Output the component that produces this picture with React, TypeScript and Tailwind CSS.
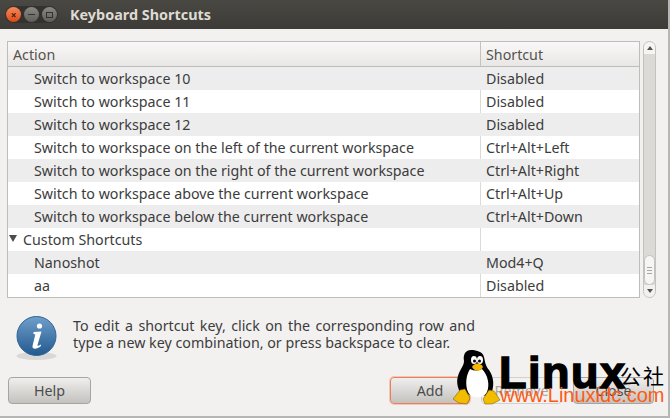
const rows: [string, string, boolean][] = [
  ["Switch to workspace 10", "Disabled", true],
  ["Switch to workspace 11", "Disabled", false],
  ["Switch to workspace 12", "Disabled", true],
  ["Switch to workspace on the left of the current workspace", "Ctrl+Alt+Left", false],
  ["Switch to workspace on the right of the current workspace", "Ctrl+Alt+Right", true],
  ["Switch to workspace above the current workspace", "Ctrl+Alt+Up", false],
  ["Switch to workspace below the current workspace", "Ctrl+Alt+Down", true],
];

function Row({ name, keys, odd, group }: { name: string; keys: string; odd: boolean; group?: boolean }) {
  return (
    <div className={`flex h-[23px] items-center ${odd ? "bg-[#eeeded]" : "bg-white"}`}>
      <div className={`flex w-[472px] items-center ${group ? "pl-[1px]" : "pl-[26px]"}`}>
        {group && <span className="mr-[6px] mb-[3px] h-0 w-0 border-x-[4px] border-t-[7px] border-x-transparent border-t-[#4c4c4c]" />}
        {name}
      </div>
      <div className={`h-full w-px ${odd ? "bg-[#eeeded]" : "bg-[#dcdad5]"}`} />
      <div className="pl-[5px]">{keys}</div>
    </div>
  );
}

function Button({ label, focus, disabled, w }: { label: string; focus?: boolean; disabled?: boolean; w: string }) {
  const look = disabled
    ? "border-[#d3d1cd] bg-[#f2f1f0] text-[#a9a7a3]"
    : focus
      ? "border-[#e9805d] bg-gradient-to-b from-[#f0efed] to-[#c4c2bf] text-[#4c4c4c] shadow-[0_0_0_1px_#f5c6b3]"
      : "border-[#a7a5a1] bg-gradient-to-b from-[#f0efed] to-[#c4c2bf] text-[#4c4c4c]";
  return <button className={`flex h-[27px] items-center justify-center rounded-[4px] border ${look} ${w}`}>{label}</button>;
}

function Tux() {
  return (
    <svg width="50" height="57" viewBox="0 0 50 57" className="absolute left-[452px] top-[349px]">
      <path d="M19 1C13 1 11 6 12 12C12 17 8 20 6 27C4 33 6 40 9 45L38 47C43 38 42 28 37 21C33 16 33 12 32 8C31 3 25 1 19 1Z" fill="#000" />
      <path d="M18 20C14 26 13 36 16 43C19 50 32 50 35 43C38 36 36 26 30 20C26 22 22 22 18 20Z" fill="#fff" />
      <ellipse cx="22" cy="11" rx="3" ry="4" fill="#fff" />
      <ellipse cx="28" cy="11" rx="3" ry="4" fill="#fff" />
      <circle cx="22.5" cy="12" r="1.5" fill="#000" />
      <circle cx="27.5" cy="12" r="1.5" fill="#000" />
      <path d="M20 18C22 14 28 13 31 18C28 23 23 23 20 18Z" fill="#f5b400" />
      <path d="M1 50L8 41L13 40L18 49L15 55L7 54Z" fill="#f2bd00" stroke="#6b5200" strokeWidth="0.5" />
      <path d="M31 50L37 41L42 42L48 51L40 55L33 55Z" fill="#f2bd00" stroke="#6b5200" strokeWidth="0.5" />
    </svg>
  );
}

export default function App() {
  return (
    <div className="relative flex h-[418px] w-[670px] flex-col overflow-hidden bg-[#f2f1f0] font-['Noto_Sans',sans-serif] text-[14.25px] text-[#3c3c3c]">
      <div className="flex h-[29px] items-center bg-gradient-to-b from-[#4a4843] to-[#3c3b37] pl-[5px]">
        <div className="flex items-center gap-[3px] rounded-full bg-[#33322e] p-[1px]">
          <span className="flex h-[15px] w-[15px] items-center justify-center rounded-full bg-gradient-to-b from-[#f58a5a] to-[#dd4814] text-[10px] leading-none font-bold text-[#4a1c08]">×</span>
          <span className="flex h-[15px] w-[15px] items-center justify-center rounded-full bg-gradient-to-b from-[#8a8984] to-[#5f5e5a]">
            <span className="h-[1px] w-[7px] bg-[#33322e]" />
          </span>
          <span className="flex h-[15px] w-[15px] items-center justify-center rounded-full bg-gradient-to-b from-[#8a8984] to-[#5f5e5a]">
            <span className="h-[6px] w-[7px] border border-[#33322e]" />
          </span>
        </div>
        <span className="ml-[12px] text-[14.4px] font-bold text-[#dfdbd2]">Keyboard Shortcuts</span>
      </div>

      <div className="flex pt-[12px] pl-[7px]">
        <div className="h-[257px] w-[633px] border border-[#bfbdb9] bg-white">
          <div className="flex h-[25px] items-center border-b border-[#bfbdb9] bg-gradient-to-b from-[#f9f8f8] to-[#e9e7e5] text-[#55524e]">
            <div className="w-[472px] pt-[1px] pl-[5px]">Action</div>
            <div className="h-full w-px bg-[#c4c2bd]" />
            <div className="pt-[1px] pl-[5px]">Shortcut</div>
          </div>
          {rows.map(([name, keys, odd]) => (
            <Row key={name} name={name} keys={keys} odd={odd} />
          ))}
          <Row name="Custom Shortcuts" keys="" odd={false} group />
          <Row name="Nanoshot" keys="Mod4+Q" odd />
          <Row name="aa" keys="Disabled" odd={false} />
        </div>
        <div className="ml-[3px] flex h-[257px] w-[13px] flex-col rounded-full border border-[#c4c2bd] bg-[#dcdad6]">
          <div className="flex h-[12px] items-center justify-center rounded-t-full bg-[#f6f5f4]">
            <span className="h-0 w-0 border-x-[3px] border-b-[4px] border-x-transparent border-b-[#55524e]" />
          </div>
          <div className="flex-1" />
          <div className="flex h-[30px] flex-col items-center justify-center gap-[2px] rounded-full border border-[#c4c2bd] bg-[#f6f5f4]">
            <span className="h-px w-[5px] bg-[#a8a6a2]" />
            <span className="h-px w-[5px] bg-[#a8a6a2]" />
            <span className="h-px w-[5px] bg-[#a8a6a2]" />
          </div>
          <div className="flex h-[12px] items-center justify-center rounded-b-full bg-[#f2f1f0]">
            <span className="h-0 w-0 border-x-[3px] border-t-[4px] border-x-transparent border-t-[#55524e]" />
          </div>
        </div>
      </div>

      <div className="flex items-start pt-[18px] pl-[16px]">
        <svg width="42" height="46" viewBox="0 0 42 46">
          <defs>
            <linearGradient id="info" x1="0" y1="0" x2="0" y2="1">
              <stop offset="0" stopColor="#6f9fcb" />
              <stop offset="1" stopColor="#23598f" />
            </linearGradient>
          </defs>
          <ellipse cx="20.500" cy="40" rx="20" ry="4" fill="#0000001a" />
          <circle cx="20.500" cy="20" r="19.500" fill="url(#info)" stroke="#2f6394" />
          <circle cx="23.500" cy="10" r="2.600" fill="#fff" />
          <path d="M17.500 16L25.500 15.500L21.500 29C21.300 30 22 30.300 25 28.500L25 30C20.500 33.500 16 33.500 16.500 30L19.300 18.500L17.500 18Z" fill="#fff" />
        </svg>
        <p className="mt-[1px] ml-[15px] leading-[17px]">
          <span className="[word-spacing:1.7px]">To edit a shortcut key, click on the corresponding row and</span>
          <br />
          type a new key combination, or press backspace to clear.
        </p>
      </div>

      <div className="mt-auto mb-[14px] flex px-[8px]">
        <Button label="Help" w="w-[83px]" />
        <Button label="Add" focus w="ml-[299px] w-[80px]" />
        <Button label="Remove" disabled w="ml-[11px] w-[81px]" />
        <Button label="Close" w="ml-[11px] w-[81px]" />
      </div>

      <div className="absolute top-[350px] left-[499px] font-['Liberation_Sans',sans-serif] text-[45px] leading-[46px] font-bold tracking-[1.5px] text-black [-webkit-text-stroke:1.5px_#000]">
        Linux
      </div>
      <div className="absolute top-[361px] left-[620px] font-['Noto_Sans_CJK_SC',sans-serif] text-[21px] leading-[28px] tracking-[2px] text-black">
        公社
      </div>
      <div className="absolute top-[385px] left-[500px] font-['Liberation_Sans',sans-serif] text-[20px] leading-[20px] text-[#ff5a14]">
        www.Linuxidc.com
      </div>
      <Tux />
      <div className="absolute right-0 bottom-0 h-[2px] w-full bg-[#b8b6b2]" />
      <div className="absolute top-0 right-0 h-full w-[2px] bg-[#b8b6b2]" />
    </div>
  );
}
